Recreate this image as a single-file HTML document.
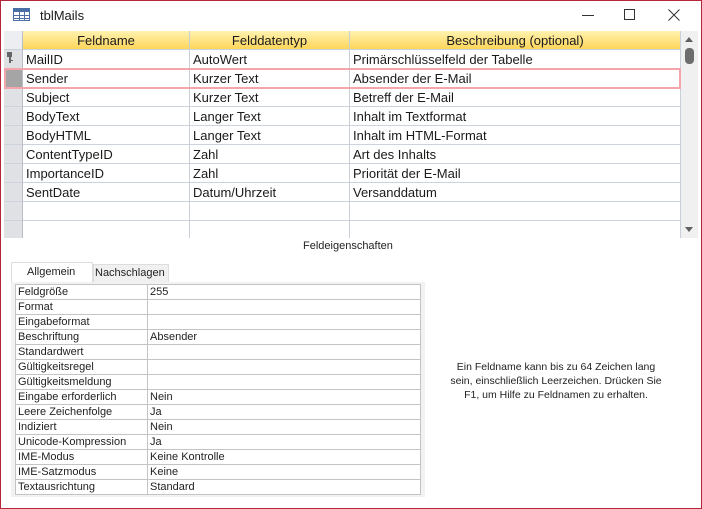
<!DOCTYPE html><html><head><style>
*{margin:0;padding:0;box-sizing:border-box}
body{width:702px;height:509px;background:#fff;position:relative;overflow:hidden;font-family:"Liberation Sans",sans-serif;color:#1a1a1a}
.a{position:absolute}
.t{position:absolute;font-size:13px;line-height:19px;white-space:nowrap}
.p{position:absolute;font-size:11px;line-height:15px;white-space:nowrap;color:#222}
</style></head><body>
<div class="a" style="left:0;top:0;width:702px;height:509px;border:1px solid #b5263a"></div>
<svg class="a" style="left:13px;top:8px" width="18" height="14"><rect x="0.5" y="0.5" width="16" height="12" fill="#fff" stroke="#4a6fa5"/><rect x="1" y="1" width="15" height="3" fill="#4a6fa5"/><path d="M1 7.5H16M1 10.5H16M6.5 4V13M11.5 4V13" stroke="#4a6fa5"/></svg>
<div class="t" style="left:40px;top:6px;font-size:13px">tblMails</div>
<div class="a" style="left:582px;top:15px;width:12px;height:1px;background:#333"></div>
<div class="a" style="left:624px;top:9px;width:11px;height:11px;border:1px solid #333"></div>
<svg class="a" style="left:668px;top:9px" width="12" height="12"><path d="M0.5 0.5L11.5 11.5M11.5 0.5L0.5 11.5" stroke="#333"/></svg>
<div class="a" style="left:4px;top:31px;width:677px;height:207px;background:#fff"></div>
<div class="a" style="left:4px;top:31px;width:18px;height:207px;background:#dfe1e5"></div>
<div class="a" style="left:23px;top:31px;width:658px;height:18px;background:linear-gradient(#fff3b0,#fdd55a)"></div>
<div class="a" style="left:4px;top:31px;width:18px;height:18px;background:#eceef1"></div>
<div id="lines"></div>
<div class="a" style="left:22px;top:31px;width:1px;height:207px;background:#b9bec6"></div>
<div class="a" style="left:189px;top:31px;width:1px;height:207px;background:#c9cfd8"></div>
<div class="a" style="left:349px;top:31px;width:1px;height:207px;background:#c9cfd8"></div>
<div class="a" style="left:680px;top:31px;width:1px;height:207px;background:#c9cfd8"></div>
<script>
var h='';for(var k=0;k<10;k++){h+='<div class="a" style="left:4px;top:'+(49+19*k)+'px;width:677px;height:1px;background:#cdd3dc"></div>';}
document.getElementById('lines').innerHTML=h;
</script>
<div class="a" style="left:4px;top:69px;width:18px;height:18px;background:#a5a5a5"></div>
<div class="a" style="left:4px;top:68px;width:677px;height:21px;border:2px solid #f2a5aa"></div>
<svg class="a" style="left:6px;top:52px" width="8" height="12"><rect x="1" y="0" width="5" height="5" fill="#666"/><rect x="3" y="5" width="2" height="6" fill="#666"/><rect x="5" y="8" width="2" height="1" fill="#666"/></svg>
<div class="t" style="left:23px;top:31px;width:166px;text-align:center">Feldname</div>
<div class="t" style="left:190px;top:31px;width:159px;text-align:center">Felddatentyp</div>
<div class="t" style="left:350px;top:31px;width:330px;text-align:center">Beschreibung (optional)</div>
<div class="t" style="left:26px;top:50px">MailID</div><div class="t" style="left:193px;top:50px">AutoWert</div><div class="t" style="left:353px;top:50px">Primärschlüsselfeld der Tabelle</div>
<div class="t" style="left:26px;top:69px">Sender</div><div class="t" style="left:193px;top:69px">Kurzer Text</div><div class="t" style="left:353px;top:69px">Absender der E-Mail</div>
<div class="t" style="left:26px;top:88px">Subject</div><div class="t" style="left:193px;top:88px">Kurzer Text</div><div class="t" style="left:353px;top:88px">Betreff der E-Mail</div>
<div class="t" style="left:26px;top:107px">BodyText</div><div class="t" style="left:193px;top:107px">Langer Text</div><div class="t" style="left:353px;top:107px">Inhalt im Textformat</div>
<div class="t" style="left:26px;top:126px">BodyHTML</div><div class="t" style="left:193px;top:126px">Langer Text</div><div class="t" style="left:353px;top:126px">Inhalt im HTML-Format</div>
<div class="t" style="left:26px;top:145px">ContentTypeID</div><div class="t" style="left:193px;top:145px">Zahl</div><div class="t" style="left:353px;top:145px">Art des Inhalts</div>
<div class="t" style="left:26px;top:164px">ImportanceID</div><div class="t" style="left:193px;top:164px">Zahl</div><div class="t" style="left:353px;top:164px">Priorität der E-Mail</div>
<div class="t" style="left:26px;top:183px">SentDate</div><div class="t" style="left:193px;top:183px">Datum/Uhrzeit</div><div class="t" style="left:353px;top:183px">Versanddatum</div>
<div class="a" style="left:681px;top:31px;width:17px;height:207px;background:#f0f0f0"></div>
<div class="a" style="left:685px;top:37px;width:0;height:0;border-left:4px solid transparent;border-right:4px solid transparent;border-bottom:5px solid #606060"></div>
<div class="a" style="left:685px;top:48px;width:9px;height:16px;border-radius:4px;background:#6d6d6d"></div>
<div class="a" style="left:685px;top:227px;width:0;height:0;border-left:4px solid transparent;border-right:4px solid transparent;border-top:5px solid #606060"></div>
<div class="p" style="left:303px;top:239px;font-size:11px">Feldeigenschaften</div>
<div class="a" style="left:11px;top:262px;width:82px;height:22px;background:#fff;border:1px solid #ddd;border-bottom:none"></div>
<div class="p" style="left:27px;top:265px;font-size:11px">Allgemein</div>
<div class="a" style="left:93px;top:264px;width:76px;height:18px;background:#f0f0f0;border:1px solid #ddd;border-bottom:none"></div>
<div class="p" style="left:95px;top:266px;font-size:11px">Nachschlagen</div>
<div class="a" style="left:11px;top:282px;width:414px;height:215px;background:#f2f2f2"></div>
<div class="a" style="left:15px;top:284px;width:406px;height:211px;background:#fff;border:1px solid #c4c4c4"></div>
<div id="pl"></div>
<div class="a" style="left:147px;top:284px;width:1px;height:211px;background:#c4c4c4"></div>
<script>
var n=[["Feldgröße","255"],["Format",""],["Eingabeformat",""],["Beschriftung","Absender"],["Standardwert",""],["Gültigkeitsregel",""],["Gültigkeitsmeldung",""],["Eingabe erforderlich","Nein"],["Leere Zeichenfolge","Ja"],["Indiziert","Nein"],["Unicode-Kompression","Ja"],["IME-Modus","Keine Kontrolle"],["IME-Satzmodus","Keine"],["Textausrichtung","Standard"]];
var s='';for(var i=0;i<14;i++){var y=284+15*i;if(i>0)s+='<div class="a" style="left:15px;top:'+y+'px;width:406px;height:1px;background:#c4c4c4"></div>';s+='<div class="p" style="left:18px;top:'+(y+1)+'px">'+n[i][0]+'</div><div class="p" style="left:150px;top:'+(y+1)+'px">'+n[i][1]+'</div>';}
document.getElementById('pl').innerHTML=s;
</script>
<div class="p" style="left:450px;top:360px;width:212px;text-align:center;white-space:normal;font-size:10.5px;line-height:14px">Ein Feldname kann bis zu 64 Zeichen lang sein, einschließlich Leerzeichen. Drücken Sie F1, um Hilfe zu Feldnamen zu erhalten.</div>
</body></html>
